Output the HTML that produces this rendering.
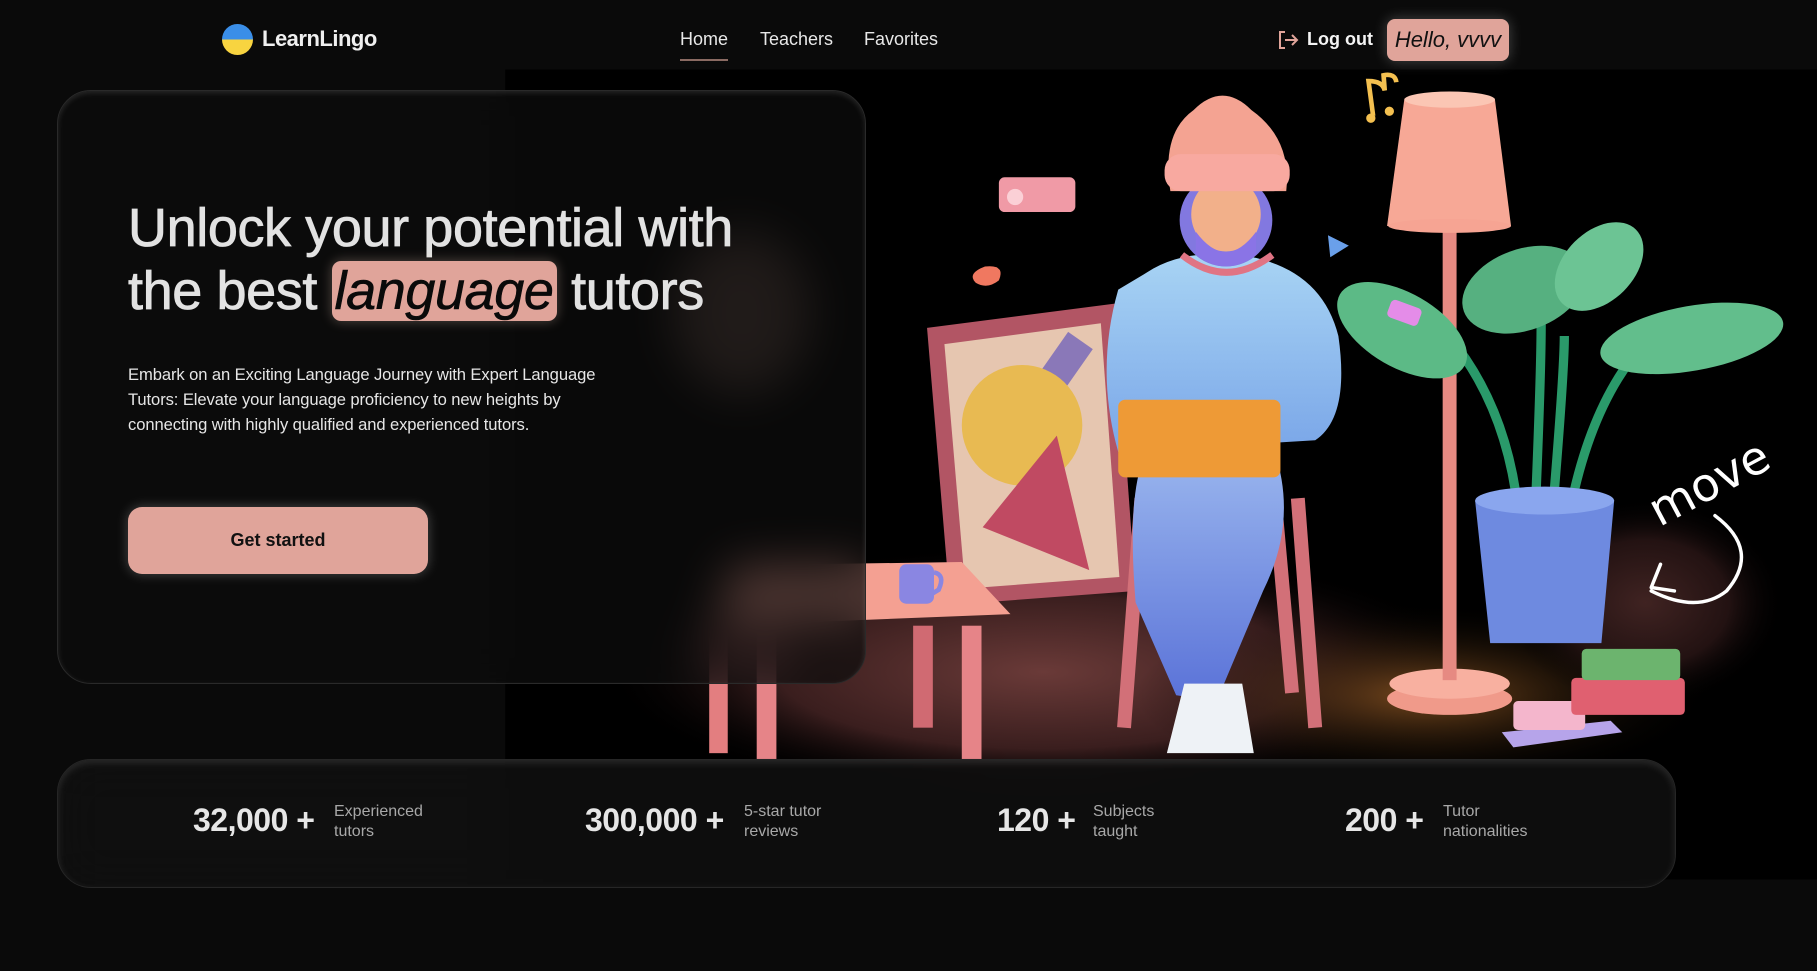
<!DOCTYPE html>
<html><head><meta charset="utf-8"><style>
*{margin:0;padding:0;box-sizing:border-box}
body{width:1817px;height:971px;background:#0a0a0a;font-family:"Liberation Sans",Arial,sans-serif;color:#e8e8e8;overflow:hidden;position:relative}
.abs{position:absolute}
.logo{left:222px;top:24px;width:31px;height:31px;border-radius:50%;background:linear-gradient(#3a8ee8 50%,#f8d440 50%)}
.logot{left:262px;top:26px;font-size:22px;font-weight:700;color:#f0f0f0;letter-spacing:-0.5px}
.nav{top:29px;font-size:18px;color:#e8e8e8}
.hello{left:1387px;top:19px;width:122px;height:42px;background:#e0a49a;border-radius:8px;color:#111;font-style:italic;font-size:22px;line-height:42px;text-align:center;box-shadow:0 0 14px rgba(255,255,255,.25)}
.card{left:57px;top:90px;width:809px;height:594px;border-radius:34px;background:rgba(12,12,12,.72);backdrop-filter:blur(24px);-webkit-backdrop-filter:blur(24px);border:1px solid #2a2a2a;box-shadow:inset 0 2px 6px rgba(255,255,255,.12)}
h1{position:absolute;left:128px;top:197px;font-size:54px;font-weight:400;line-height:63px;color:#e2e2e2;-webkit-text-stroke:0.8px #e2e2e2;letter-spacing:-0.4px;white-space:nowrap}
.hl{background:#e0a49a;color:#0a0a0a;-webkit-text-stroke:0.6px #0a0a0a;font-style:italic;border-radius:9px;padding:0 3px;box-shadow:0 0 12px rgba(255,220,200,.3)}
.p{left:128px;top:362px;font-size:16.6px;line-height:25px;color:#e6e6e6;white-space:nowrap;letter-spacing:-0.1px}
.btn{left:128px;top:507px;width:300px;height:67px;background:#e0a49a;border-radius:14px;color:#111;font-weight:700;font-size:18px;text-align:center;line-height:67px;box-shadow:0 0 12px rgba(255,255,255,.25)}
.stats{left:57px;top:759px;width:1619px;height:129px;border-radius:34px;background:rgba(16,16,16,.8);backdrop-filter:blur(24px);-webkit-backdrop-filter:blur(24px);border:1px solid #262626;box-shadow:inset 0 3px 8px rgba(255,255,255,.12)}
.num{top:802px;font-size:32px;font-weight:700;color:#e6e6e6;white-space:nowrap;letter-spacing:-0.5px}
.lab{top:802px;font-size:16px;line-height:20px;color:#a8a8a8}
</style></head><body>
<svg class="abs" style="left:0;top:0" width="1817" height="971" viewBox="0 0 1568 838">
<defs>
<radialGradient id="g1" cx="50%" cy="50%" r="50%"><stop offset="0" stop-color="#6a3a38"/><stop offset=".6" stop-color="#3a1e1e"/><stop offset="1" stop-color="#000" stop-opacity="0"/></radialGradient>
<radialGradient id="g2" cx="50%" cy="50%" r="50%"><stop offset="0" stop-color="#7a4a1e"/><stop offset="1" stop-color="#000" stop-opacity="0"/></radialGradient>
<linearGradient id="sw" x1="0" y1="0" x2="0" y2="1"><stop offset="0" stop-color="#a8d4f4"/><stop offset="1" stop-color="#7aa6e8"/></linearGradient>
<linearGradient id="pt" x1="0" y1="0" x2="0" y2="1"><stop offset="0" stop-color="#9ab6ee"/><stop offset="1" stop-color="#5a72d8"/></linearGradient>
</defs>
<rect x="436" y="60" width="1132" height="699" fill="#000"/>
<ellipse cx="900" cy="580" rx="380" ry="110" fill="url(#g1)"/>
<ellipse cx="1230" cy="600" rx="250" ry="80" fill="url(#g2)"/>
<ellipse cx="1420" cy="520" rx="120" ry="90" fill="url(#g1)" opacity=".6"/>
<ellipse cx="640" cy="270" rx="60" ry="70" fill="#8a6a60" opacity=".6"/>
<polygon points="800,283 962,262 980,510 820,522" fill="#b25564"/>
<polygon points="815,297 950,279 966,498 833,508" fill="#e6c6b0"/>
<rect x="838" y="330" width="120" height="26" fill="#8a78b8" transform="rotate(-55 898 343)"/>
<circle cx="882" cy="367" r="52" fill="#e8ba52"/>
<polygon points="848,455 912,376 940,492" fill="#c04a62"/>
<polygon points="630,488 830,485 872,530 620,540" fill="#f4a092"/>
<rect x="612" y="540" width="16" height="110" fill="#e37e80"/>
<rect x="653" y="545" width="17" height="110" fill="#e68488"/>
<rect x="788" y="540" width="17" height="88" fill="#d06a72"/>
<rect x="830" y="540" width="17" height="115" fill="#e68488"/>
<rect x="776" y="487" width="30" height="34" rx="6" fill="#8a86e2"/>
<path d="M806 494q10 2 4 15l-5 3" stroke="#8a86e2" stroke-width="4" fill="none"/>
<path d="M985 430L970 628M1120 430L1135 628M1100 430L1115 598" stroke="#d27078" stroke-width="12"/>
<path d="M980 520 q-8 -100 10 -130 l110 0 q20 60 -10 120 l-40 95 l-35 -5 z" fill="url(#pt)"/>
<path d="M1022 590l50 0l10 60l-75 0z" fill="#eef2f6"/>
<path d="M990 235 q30 -20 80 -15 q70 10 85 70 q10 70 -20 90 l-170 10 q-20 -70 0 -140 z" fill="url(#sw)"/>
<rect x="965" y="345" width="140" height="67" rx="6" fill="#ee9a36"/>
<ellipse cx="1058" cy="190" rx="40" ry="40" fill="#8278e0"/>
<ellipse cx="1058" cy="185" rx="30" ry="32" fill="#f2b08a"/>
<path d="M1032 200q26 35 52 0l0 20q-26 20 -52 0z" fill="#8a74e6"/>
<path d="M1010 165q-8 -50 20 -70q25 -25 50 0q35 25 30 70z" fill="#f4a392"/>
<rect x="1005" y="133" width="108" height="32" rx="14" fill="#f8a9a0"/>
<path d="M1020 220q38 30 78 0" stroke="#e07484" stroke-width="6" fill="none"/>
<ellipse cx="1251" cy="603" rx="54" ry="14" fill="#f09a8a"/>
<ellipse cx="1251" cy="590" rx="52" ry="13" fill="#f8b0a0"/>
<rect x="1245" y="195" width="12" height="392" fill="#e68a82"/>
<polygon points="1212,85 1290,85 1304,195 1197,195" fill="#f7a896"/>
<ellipse cx="1251" cy="195" rx="53" ry="6" fill="#f6a493"/>
<ellipse cx="1251" cy="86" rx="39" ry="7" fill="#fbc6b4"/>
<path d="M1310 440q-10-90-60-150M1325 440q5-120 5-160M1340 440q10-120 10-150M1355 440q20-100 70-150" stroke="#2a9a6a" stroke-width="8" fill="none"/>
<ellipse cx="1210" cy="285" rx="62" ry="32" fill="#5cba86" transform="rotate(30 1210 285)"/>
<ellipse cx="1315" cy="250" rx="55" ry="35" fill="#56b080" transform="rotate(-20 1315 250)"/>
<ellipse cx="1380" cy="230" rx="45" ry="30" fill="#6cc494" transform="rotate(-45 1380 230)"/>
<ellipse cx="1460" cy="292" rx="80" ry="28" fill="#62be8c" transform="rotate(-10 1460 292)"/>
<polygon points="1273,432 1393,432 1382,555 1286,555" fill="#6e8ae0"/>
<ellipse cx="1333" cy="432" rx="60" ry="12" fill="#8aa6ee"/>
<polygon points="1296,632 1390,622 1400,632 1306,645" fill="#b6a4ea"/>
<rect x="1306" y="605" width="62" height="25" rx="4" fill="#f4b6cc"/>
<rect x="1356" y="585" width="98" height="32" rx="4" fill="#e06070"/>
<rect x="1365" y="560" width="85" height="27" rx="4" fill="#6cb46e"/>
<path d="M1185 100l-4-30q12 0 14 8l-1-13q10-2 11 6" stroke="#f4c050" stroke-width="4" fill="none"/>
<circle cx="1183" cy="102" r="4" fill="#f4c050"/><circle cx="1199" cy="96" r="4" fill="#f4c050"/>
<rect x="862" y="153" width="66" height="30" rx="5" fill="#f09aa6"/>
<circle cx="876" cy="170" r="7" fill="#fbd0d6"/>
<path d="M850 230q-16 6-8 14q10 6 20-2q6-14-12-12z" fill="#f07860"/>
<polygon points="1146,203 1164,212 1148,222" fill="#6aa0ea"/>
<rect x="1198" y="262" width="28" height="16" rx="4" fill="#e48ce8" transform="rotate(20 1212 270)"/>
<text x="1432" y="455" fill="#fff" font-family="DejaVu Sans,sans-serif" font-size="40" transform="rotate(-28 1432 455)">move</text>
<path d="M1480 445q40 30 10 65q-25 20-65 0M1425 507l8-20M1425 507l20 3" stroke="#fff" stroke-width="3" fill="none" stroke-linecap="round"/>
</svg>
<div class="abs logo"></div>
<div class="abs logot">LearnLingo</div>
<div class="abs nav" style="left:680px">Home</div>
<div class="abs" style="left:680px;top:59px;width:48px;height:2px;background:#8a6a62"></div>
<div class="abs nav" style="left:760px">Teachers</div>
<div class="abs nav" style="left:864px">Favorites</div>
<svg class="abs" style="left:1277px;top:30px" width="22" height="20" viewBox="0 0 22 20"><path d="M8 2H3v16h5" stroke="#e0a49a" stroke-width="2" fill="none"/><path d="M8 10h12M15 5l5 5-5 5" stroke="#e0a49a" stroke-width="2" fill="none"/></svg>
<div class="abs nav" style="left:1307px;font-weight:700;color:#f4f4f4">Log out</div>
<div class="abs hello">Hello, vvvv</div>
<div class="abs card"></div>
<h1>Unlock your potential with<br>the best <span class="hl">language</span> tutors</h1>
<div class="abs p">Embark on an Exciting Language Journey with Expert Language<br>Tutors: Elevate your language proficiency to new heights by<br>connecting with highly qualified and experienced tutors.</div>
<div class="abs btn">Get started</div>
<div class="abs stats"></div>
<div class="abs num" style="left:193px">32,000 +</div><div class="abs lab" style="left:334px">Experienced<br>tutors</div>
<div class="abs num" style="left:585px">300,000 +</div><div class="abs lab" style="left:744px">5-star tutor<br>reviews</div>
<div class="abs num" style="left:997px">120 +</div><div class="abs lab" style="left:1093px">Subjects<br>taught</div>
<div class="abs num" style="left:1345px">200 +</div><div class="abs lab" style="left:1443px">Tutor<br>nationalities</div>
</body></html>
